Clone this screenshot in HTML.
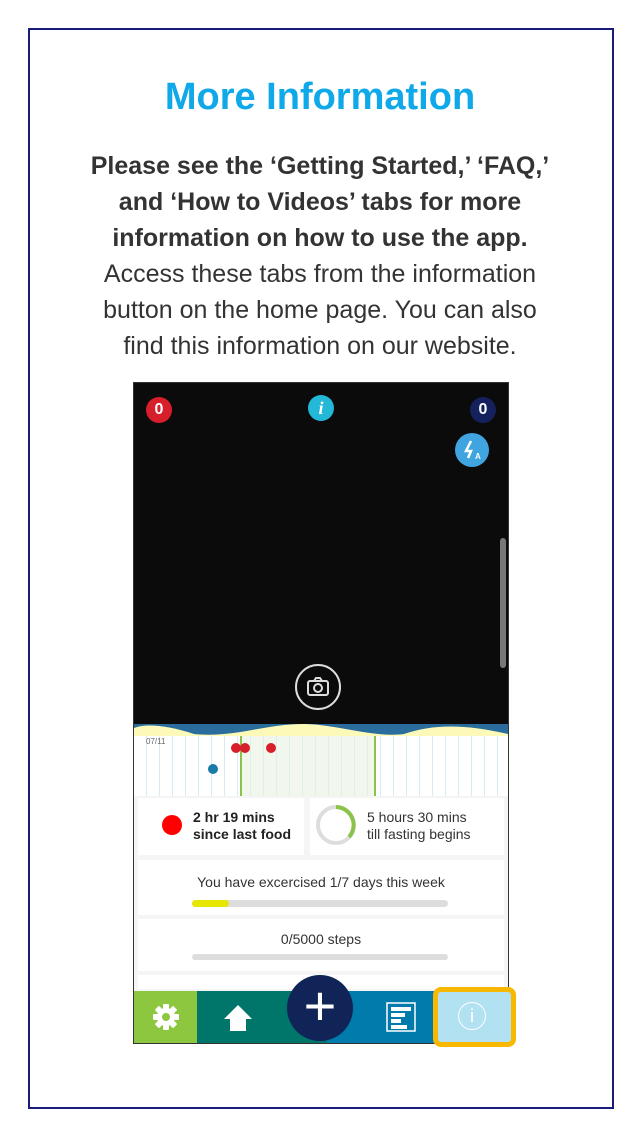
<!DOCTYPE html><html><head><style>
body{margin:0;width:640px;height:1135px;background:#fff;position:relative;font-family:"Liberation Sans",sans-serif;overflow:hidden}
.frame{position:absolute;left:28px;top:28px;width:582px;height:1077px;border:2px solid #1a1a7a}
h1{position:absolute;top:76px;left:0;width:640px;text-align:center;margin:0;font-size:38px;color:#0fa8e8;font-weight:bold}
.t{position:absolute;top:148px;left:0;width:640px;text-align:center;font-size:25px;line-height:36px;color:#333}
.ph{position:absolute;left:133px;top:382px;width:374px;height:660px;border:1px solid #333;background:#f5f5f5;overflow:hidden}
.abs{position:absolute}
.c{position:absolute;border-radius:50%;color:#fff;font-weight:bold;text-align:center}
</style></head><body>
<div class="frame"></div>
<h1>More Information</h1>
<div class="t"><b>Please see the ‘Getting Started,’ ‘FAQ,’<br>and ‘How to Videos’ tabs for more<br>information on how to use the app.</b><br>Access these tabs from the information<br>button on the home page. You can also<br>find this information on our website.</div>
<div class="ph">
 <div class="abs" style="left:0;top:0;width:374px;height:341px;background:#0b0b0b"></div>
 <div class="c" style="left:12px;top:14px;width:26px;height:26px;background:#d71e2b;line-height:26px;font-size:16px">0</div>
 <div class="c" style="left:174px;top:12px;width:26px;height:26px;background:#23b7d8;line-height:26px;font-size:18px;font-style:italic;font-family:'Liberation Serif',serif">i</div>
 <div class="c" style="left:336px;top:14px;width:26px;height:26px;background:#14215c;line-height:26px;font-size:16px">0</div>
 <div class="c" style="left:321px;top:50px;width:34px;height:34px;background:#3fa4e0"><svg width="34" height="34"><path d="M16 8L11 18H16L13 25" fill="none" stroke="#fff" stroke-width="2.5"/><text x="20" y="26" font-size="8" fill="#fff" font-weight="bold" font-family="Liberation Sans">A</text></svg></div>
 <div class="abs" style="left:366px;top:155px;width:6px;height:130px;background:#777;border-radius:3px"></div>
 <div class="c" style="left:161px;top:281px;width:46px;height:46px;border:2px solid #ddd;box-sizing:border-box"><svg width="42" height="42" viewBox="0 0 42 42"><rect x="11" y="15" width="20" height="14" rx="2" fill="none" stroke="#ddd" stroke-width="2"/><circle cx="21" cy="22" r="4" fill="none" stroke="#ddd" stroke-width="2"/><path d="M17 15l2-3h4l2 3" fill="none" stroke="#ddd" stroke-width="2"/></svg></div>
 <div class="abs" style="left:0;top:341px;width:374px;height:12px;background:#fdf9b8"></div>
 <svg class="abs" style="left:0;top:341px" width="374" height="14"><path d="M0 0H374V10C330 0 300 0 270 10 240 14 200 0 170 0 130 0 100 14 60 10 30 0 10 0 0 4Z" fill="#2a6d9c"/></svg>
 <div class="abs" style="left:0;top:353px;width:374px;height:60px;background:#fff;background-image:repeating-linear-gradient(90deg,transparent 0 12px,#d6ecf5 12px 13px)"></div>
 <div class="abs" style="left:106px;top:353px;width:134px;height:60px;background:rgba(230,240,220,.5)"></div>
 <div class="abs" style="left:106px;top:353px;width:2px;height:60px;background:#8bc34a"></div>
 <div class="abs" style="left:240px;top:353px;width:2px;height:60px;background:#8bc34a"></div>
 <div class="abs" style="left:12px;top:354px;font-size:8px;color:#666">07/11</div>
 <div class="c" style="left:97px;top:360px;width:10px;height:10px;background:#d71e2b"></div>
 <div class="c" style="left:106px;top:360px;width:10px;height:10px;background:#d71e2b"></div>
 <div class="c" style="left:132px;top:360px;width:10px;height:10px;background:#d71e2b"></div>
 <div class="c" style="left:74px;top:381px;width:10px;height:10px;background:#1a7aa8"></div>
 <div class="abs" style="left:4px;top:415px;width:166px;height:57px;background:#fff"></div>
 <div class="c" style="left:28px;top:432px;width:20px;height:20px;background:#f00"></div>
 <div class="abs" style="left:59px;top:426px;font-size:14px;font-weight:bold;color:#222;line-height:17px">2 hr 19 mins<br>since last food</div>
 <div class="abs" style="left:176px;top:415px;width:194px;height:57px;background:#fff"></div>
 <svg class="abs" style="left:180px;top:420px" width="44" height="44"><circle cx="22" cy="22" r="18" fill="none" stroke="#ddd" stroke-width="4"/><path d="M22 4A18 18 0 0 1 35 34" fill="none" stroke="#8bc34a" stroke-width="4"/></svg>
 <div class="abs" style="left:233px;top:426px;font-size:14px;color:#333;line-height:17px">5 hours 30 mins<br>till fasting begins</div>
 <div class="abs" style="left:4px;top:477px;width:366px;height:55px;background:#fff"></div>
 <div class="abs" style="left:0;top:491px;width:374px;text-align:center;font-size:14px;color:#333">You have excercised 1/7 days this week</div>
 <div class="abs" style="left:58px;top:517px;width:256px;height:7px;background:#ddd;border-radius:4px"></div>
 <div class="abs" style="left:58px;top:517px;width:37px;height:7px;background:#e6e600;border-radius:4px"></div>
 <div class="abs" style="left:4px;top:536px;width:366px;height:52px;background:#fff"></div>
 <div class="abs" style="left:0;top:548px;width:374px;text-align:center;font-size:14px;color:#333">0/5000 steps</div>
 <div class="abs" style="left:58px;top:571px;width:256px;height:6px;background:#ddd;border-radius:3px"></div>
 <div class="abs" style="left:4px;top:592px;width:366px;height:14px;background:#fff"></div>
 <div class="abs" style="left:0;top:608px;width:63px;height:52px;background:#8dc63f"></div>
 <div class="abs" style="left:63px;top:608px;width:130px;height:52px;background:#00766a"></div>
 <div class="abs" style="left:193px;top:608px;width:181px;height:52px;background:#007bab"></div>
 <svg class="abs" style="left:17px;top:619px" width="30" height="30" viewBox="0 0 30 30"><g fill="#fff"><circle cx="15" cy="15" r="9"/><rect x="12" y="2" width="6" height="26" rx="1"/><rect x="12" y="2" width="6" height="26" rx="1" transform="rotate(45 15 15)"/><rect x="12" y="2" width="6" height="26" rx="1" transform="rotate(90 15 15)"/><rect x="12" y="2" width="6" height="26" rx="1" transform="rotate(135 15 15)"/></g><circle cx="15" cy="15" r="4" fill="#8dc63f"/></svg>
 <svg class="abs" style="left:89px;top:620px" width="30" height="30"><path d="M15 2L29 16H23V28H7V16H1Z" fill="#fff"/></svg>
 <div class="c" style="left:153px;top:592px;width:66px;height:66px;background:#102458;line-height:62px;font-size:56px;font-weight:normal">+</div>
 <svg class="abs" style="left:252px;top:619px" width="30" height="30"><rect x="1" y="1" width="28" height="28" fill="none" stroke="#fff" stroke-width="1.5"/><rect x="5" y="5" width="20" height="4" fill="#fff"/><rect x="5" y="11" width="14" height="4" fill="#fff"/><rect x="5" y="17" width="10" height="4" fill="#fff"/><rect x="5" y="23" width="16" height="4" fill="#fff"/></svg>
</div>
<div class="abs" style="left:433px;top:987px;width:73px;height:50px;background:#b2e1f2;border:5px solid #f8b800;border-radius:8px"></div>
<div class="c" style="left:458px;top:1002px;width:26px;height:26px;border:1.5px solid #fff;line-height:26px;font-size:18px;font-weight:normal">i</div>
</body></html>
